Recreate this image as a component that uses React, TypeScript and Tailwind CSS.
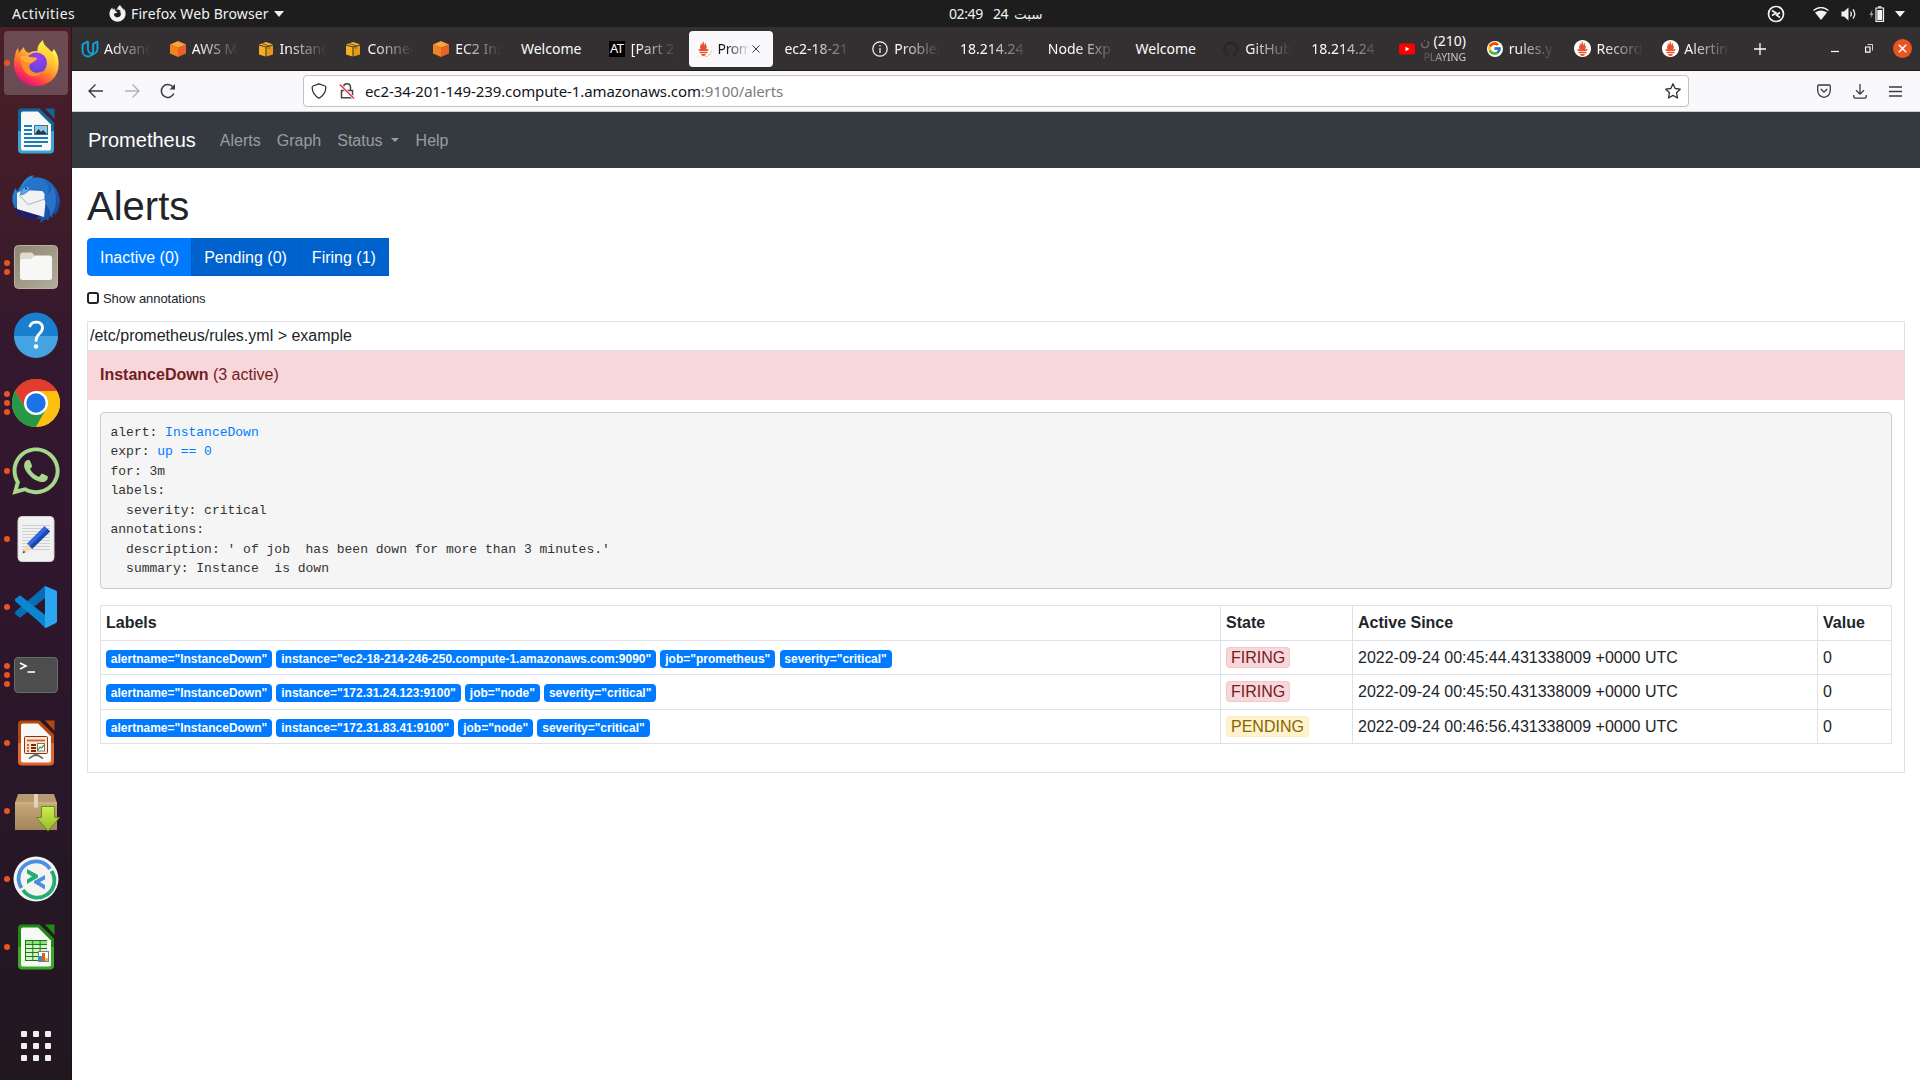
import React from "react";
import { SiPrometheus, SiUdacity, SiGithub } from "react-icons/si";
import { FcGoogle } from "react-icons/fc";
import { FaFirefoxBrowser, FaWhatsapp } from "react-icons/fa";

/* ---------- dock icons ---------- */

const FirefoxIcon = () => (
  <svg viewBox="0 0 48 48" className="size-12">
    <defs>
      <linearGradient id="ffBody" x1="0.85" y1="0.1" x2="0.25" y2="0.95">
        <stop offset="0" stopColor="#fff44f" />
        <stop offset="0.3" stopColor="#ffbd3a" />
        <stop offset="0.55" stopColor="#ff7a2c" />
        <stop offset="0.8" stopColor="#fb3550" />
        <stop offset="1" stopColor="#e00f86" />
      </linearGradient>
      <linearGradient id="ffTail" x1="0.6" y1="0" x2="0.5" y2="1">
        <stop offset="0" stopColor="#fff24a" />
        <stop offset="0.6" stopColor="#ffc936" />
        <stop offset="1" stopColor="#ff8a2a" />
      </linearGradient>
      <radialGradient id="ffGlobe" cx="0.6" cy="0.25" r="0.8">
        <stop offset="0" stopColor="#a13cf0" />
        <stop offset="0.6" stopColor="#7542e5" />
        <stop offset="1" stopColor="#4a46c8" />
      </radialGradient>
    </defs>
    <path d="M3 17 C3 13 5 10 6 9 L7 14 C8 12 10 10 12 8 C12 11 14 13 17 14 C20 12 24 11 28 13 L38 14 C37 11 39 12 40 13 L42 10 C46 16 47 21 46.500 27 C46 39 36 47 24.500 47 C12 47 2.500 38 2 26 C1.800 22 2 19 3 17 Z" fill="url(#ffBody)" />
    <circle cx="24.500" cy="24" r="10.500" fill="url(#ffGlobe)" />
    <path d="M31 1 C27 4 25 8 25.500 13 C32 14 37 19 36.500 26 C36 30 34 33 31 35 C38 34 43 28 43 22 C43 17 40 13 37 10 C34 7 31 5 31 1 Z" fill="url(#ffTail)" />
    <path d="M8 18 C11 16 15 17 18 18 L25 19 C25 21 23 22 20 24 C17 25 17 28 18 30 C20 34 26 35 30 32 C28 38 19 39 14 34 C10 30 9 24 8 18 Z" fill="#ff8a2b" />
    <path d="M8 18 C12 16 15 17 18 18 L25 19 C24 22 21 22 19 24 C14 24 10 22 8 18 Z" fill="#ffae35" />
  </svg>
);

type DocProps = { dark: string; light: string; id: string; children: React.ReactNode };

const OfficeDoc = ({ dark, light, id, children }: DocProps) => (
  <svg viewBox="0 0 48 48" className="size-12">
    <defs>
      <linearGradient id={id} x1="0" y1="0" x2="0" y2="1">
        <stop offset="0" stopColor={dark} />
        <stop offset="0.49" stopColor={dark} />
        <stop offset="0.51" stopColor={light} />
        <stop offset="1" stopColor={light} />
      </linearGradient>
    </defs>
    <path d="M33 1.500 H42.500 V12 Z" fill={dark} />
    <path d="M9.500 1.500 H27.500 L42 15.500 V42.500 Q42 46.500 38 46.500 H10 Q6 46.500 6 42.500 V5.500 Q6 1.500 9.500 1.500 Z" fill={`url(#${id})`} />
    <path d="M11 4.500 H26 L39 17.500 V41.500 Q39 43.500 37 43.500 H11 Q9 43.500 9 41.500 V6.500 Q9 4.500 11 4.500 Z" fill="#f8f8f8" />
    {children}
  </svg>
);

const WriterIcon = () => (
  <OfficeDoc id="docWriter" dark="#10659c" light="#3ba5d4">
    <path d="M12 19 H20 M12 23 H20 M12 27 H20 M12 31 H36 M12 35 H36 M12 39 H30" stroke="#1b7cb6" strokeWidth="1.800" />
    <rect x="22.500" y="18.500" width="13" height="9" fill="#8fc7e8" stroke="#1b7cb6" />
    <path d="M23 27 L26.500 22 L29 25 L31 23 L35 27 Z" fill="#333" />
    <path d="M32 19 h3 v3 Z" fill="#fbb62b" />
  </OfficeDoc>
);

const ImpressIcon = () => (
  <OfficeDoc id="docImpress" dark="#b5470d" light="#e0662c">
    <rect x="12.500" y="17.500" width="23" height="17" rx="1" fill="#fbe3d5" stroke="#8b3510" />
    <path d="M15 21.500 H33" stroke="#d6602a" strokeWidth="1.800" />
    <path d="M15 26 h2 M15 29 h2 M15 32 h2" stroke="#d6602a" strokeWidth="1.800" />
    <path d="M19 26 h5 M19 29 h5 M19 32 h5" stroke="#7a2b08" strokeWidth="1.800" />
    <rect x="25.500" y="24.500" width="7" height="7.500" fill="#fff" stroke="#777" />
    <path d="M26 31 L28 28 L29.500 29 L32 26" stroke="#2ea12e" strokeWidth="1.200" fill="none" />
    <path d="M24 35 L17 39.500 M24 35 L31 39.500 M22 36.500 h4" stroke="#666" strokeWidth="1.500" />
  </OfficeDoc>
);

const CalcIcon = () => (
  <OfficeDoc id="docCalc" dark="#1f8a12" light="#3bab26">
    <rect x="13" y="17" width="22" height="21" fill="#1a7a10" />
    {[18, 22, 26, 30, 34].map((y) =>
      [14, 21.3, 28.6].map((x) => (
        <rect key={`${x}-${y}`} x={x} y={y} width="6.300" height="3" fill={y === 18 ? "#8ce07c" : "#d4f5cc"} />
      )),
    )}
    <rect x="26.500" y="28.500" width="10" height="10" fill="#fff" stroke="#7b7b7b" />
    <rect x="27" y="33" width="3" height="5" fill="#2d93d1" />
    <rect x="30" y="30" width="3" height="8" fill="#dd5a2c" />
    <rect x="33" y="35" width="3" height="3" fill="#f3bc2a" />
  </OfficeDoc>
);

const ThunderbirdIcon = () => (
  <svg viewBox="0 0 48 48" className="size-12">
    <defs>
      <linearGradient id="tbBlue" x1="0" y1="0" x2="1" y2="1">
        <stop offset="0" stopColor="#2f9be0" />
        <stop offset="0.5" stopColor="#1f62bd" />
        <stop offset="1" stopColor="#164391" />
      </linearGradient>
    </defs>
    <path d="M10 9 C14 2 19 0 22 0.500 L20 3 C34 0 47 11 48 26 C48 33 44 39 43 40 L42 37 L40 43 L38 41 L36 46 L34 44 L28 48 L29 43 C14 48 2 38 0.500 26 C0 21 1 17 4 13 L5 17 Z" fill="url(#tbBlue)" />
    <path d="M2 34 C6 42 14 45 24 44 L32 38 L6 32 Z" fill="#221b66" />
    <path d="M5 18 L11 15 L31 16 L34 22 L32 42 L5 34 Z" fill="#f1f2f4" />
    <path d="M7 20 L16 29.500 L33 24" fill="none" stroke="#aaa" strokeWidth="0.900" />
    <path d="M8 20 C9 11 15 4 24 3 C35 5 40 14 34 20 C30 14 22 12 17 15.500 C14 18 11 21 8 20 Z" fill="#2474cb" />
    <path d="M9 19.500 C9 14 13 11 17 12.500 C16 17 12 20.500 9 19.500 Z" fill="#5aa8ea" />
    <circle cx="14" cy="13.500" r="1" fill="#112b62" />
    <path d="M33 18 C38 20 42 14 38 8 C46 17 46 32 38 42 C40 31 30 30 33 18 Z" fill="#2a72c8" />
  </svg>
);

const FilesIcon = () => (
  <svg viewBox="0 0 48 48" className="size-12">
    <defs>
      <linearGradient id="filesBg" x1="0" y1="0" x2="1" y2="1">
        <stop offset="0" stopColor="#8d8672" />
        <stop offset="1" stopColor="#b4ad9b" />
      </linearGradient>
    </defs>
    <rect x="2.500" y="2.500" width="43" height="43" rx="4" fill="url(#filesBg)" stroke="#b9b3a4" />
    <path d="M8 12 Q8 9.500 10.500 9.500 H20 L23 13 V18 H8 Z" fill="#dedacd" />
    <path d="M10.500 16 H19 L23 12.500 H37.500 Q40 12.500 40 15 V34.500 Q40 37 37.500 37 H10.500 Q8 37 8 34.500 V18.500 Q8 16 10.500 16 Z" fill="#f7f7f5" />
  </svg>
);

const HelpIcon = () => (
  <svg viewBox="0 0.500 48 48" className="size-12">
    <circle cx="24" cy="24" r="22" fill="#1b7fd0" />
    <path d="M2 25.500 H46 A22 22 0 0 1 2 25.500 Z" fill="#46a3e2" />
    <path d="M18 15.500 C20 10 30 10 30.500 17 C31 23 24 23 24 30" fill="none" stroke="#fff" strokeWidth="2.800" strokeLinecap="round" />
    <circle cx="24" cy="36" r="2.300" fill="#fff" />
  </svg>
);

const ChromeIcon = () => (
  <svg viewBox="0 0 48 48" className="size-12">
    <circle cx="24" cy="24" r="24" fill="#fcc010" />
    <path d="M24 12 H44.800 A24 24 0 0 0 3.200 12 L13.600 30 Z" fill="#e33b2e" />
    <path d="M3.200 12 A24 24 0 0 0 24 48 L34.400 30 L24 30 L13.600 30 Z" fill="#279847" />
    <path d="M34.400 30 A12 12 0 0 0 24 12 H44.800 A24 24 0 0 1 24 48 Z" fill="#fcc010" />
    <circle cx="24" cy="24" r="12" fill="#fff" />
    <circle cx="24" cy="24" r="9.700" fill="#1a73e8" />
  </svg>
);

const EditorIcon = () => (
  <svg viewBox="0 0 48 48" className="size-12">
    <rect x="6" y="1.500" width="36" height="45" rx="4" fill="#f1f1f1" stroke="#d2d2d2" />
    <path d="M10 10.500 H38 M10 13.500 H38 M10 16.500 H38 M10 19.500 H38 M10 22.500 H38 M10 25.500 H38 M10 28.500 H38 M10 31.500 H38 M10 34.500 H38" stroke="#cfcfcf" />
    <path d="M32.500 11 L38 16.500 L20 34 L15 28.500 Z" fill="#2f68dc" />
    <path d="M35.500 14 L38 16.500 L20 34 L17.500 31.500 Z" fill="#1c48ad" />
    <path d="M15 28.500 L20 34 L10.500 38.500 Z" fill="#f6d8b8" />
    <path d="M11.500 35.500 L13.500 37.300 L10.500 38.500 Z" fill="#444" />
  </svg>
);

const CodeIcon = () => (
  <svg viewBox="0 0 48 48" className="size-12">
    <path d="M3 30 Q3 29 4 28 L33 3 V15 L9 34 Q8 35 7 34 L3 31 Z" fill="#0a6db4" />
    <path d="M3 16 L7 13 Q8 12 9 13 L33 32 V44 L4 19 Q3 18 3 17 Z" fill="#0b86d1" />
    <path d="M33 3 L44 7.500 Q45 8 45 9 V38 Q45 39.500 44 40 L34 45 Q33 45 33 44 Z" fill="#2ba6f2" />
    <path d="M33 3 L32 3.500 L22 14 L33 14 Z" fill="#0a6db4" />
    <path d="M33 45 L22 33 L33 32 Z" fill="#0b86d1" />
  </svg>
);

const TerminalIcon = () => (
  <svg viewBox="0 0 48 48" className="size-12">
    <rect x="2.500" y="6.500" width="43" height="35" rx="3.500" fill="#4d4d4d" stroke="#6c6c6c" />
    <path d="M8 12 L14 15 L8 18" fill="none" stroke="#fff" strokeWidth="1.700" />
    <path d="M15.500 21 H23" stroke="#fff" strokeWidth="1.600" />
  </svg>
);

const PackageIcon = () => (
  <svg viewBox="0 -2 48 48" className="size-12">
    <defs>
      <linearGradient id="pkg" x1="0" y1="0" x2="0" y2="1">
        <stop offset="0" stopColor="#c6a879" />
        <stop offset="1" stopColor="#a3855b" />
      </linearGradient>
      <linearGradient id="pkgArrow" x1="0" y1="0" x2="0" y2="1">
        <stop offset="0" stopColor="#d3ea4f" />
        <stop offset="1" stopColor="#93bd2a" />
      </linearGradient>
    </defs>
    <path d="M6 5 H42 L45 14 H3 Z" fill="#b59a72" />
    <path d="M3 14 H45 V41 H3 Z" fill="url(#pkg)" />
    <path d="M3 14 H45" stroke="#d9c29b" />
    <path d="M22 5 H26 V18.500 H22 Z" fill="#e2d3b9" />
    <path d="M29.500 17.500 H42.500 V28.500 H47.500 L36 42 L24.500 28.500 H29.500 Z" fill="url(#pkgArrow)" stroke="#5f8f1c" />
  </svg>
);

const RemoteIcon = () => (
  <svg viewBox="0 0 48 48" className="size-12">
    <circle cx="24" cy="24" r="22.500" fill="#f5f4f0" />
    <path d="M9.500 33 A17 17 0 0 1 38 14" fill="none" stroke="#4a90e2" strokeWidth="3.800" />
    <path d="M39.500 16 A17 17 0 0 1 11 35" fill="none" stroke="#1fae75" strokeWidth="3.800" />
    <path d="M15 14 L26 20 L26 22.500 L15 29 V24.500 L20 21.500 L15 18.500 Z" fill="#1fae75" />
    <path d="M33 20 L22 26 V28 L33 34.500 V30 L28 27 L33 24.500 Z" fill="#4a90e2" />
  </svg>
);

const dock: { icon: React.ReactNode; dots: number; active?: boolean; name: string }[] = [
  { name: "firefox", icon: <FirefoxIcon />, dots: 1, active: true },
  { name: "writer", icon: <WriterIcon />, dots: 0 },
  { name: "mail", icon: <ThunderbirdIcon />, dots: 0 },
  { name: "files", icon: <FilesIcon />, dots: 2 },
  { name: "help", icon: <HelpIcon />, dots: 0 },
  { name: "chrome", icon: <ChromeIcon />, dots: 3 },
  { name: "whatsapp", icon: <FaWhatsapp className="size-[54px] shrink-0 text-[#a5d88a]" />, dots: 1 },
  { name: "editor", icon: <EditorIcon />, dots: 1 },
  { name: "code", icon: <CodeIcon />, dots: 1 },
  { name: "terminal", icon: <TerminalIcon />, dots: 3 },
  { name: "impress", icon: <ImpressIcon />, dots: 1 },
  { name: "package", icon: <PackageIcon />, dots: 1 },
  { name: "remote", icon: <RemoteIcon />, dots: 1 },
  { name: "calc", icon: <CalcIcon />, dots: 1 },
];

const Dock = () => (
  <aside className="flex w-[72px] shrink-0 flex-col border-r border-black/30 bg-[linear-gradient(180deg,#4a1f28_0%,#3c1b2a_22%,#34182f_30%,#2e162c_55%,#271728_75%,#22171f_100%)] pt-[2px]">
    {dock.map((item) => (
      <div key={item.name} className="flex h-[68px] items-center">
        <div className="flex w-1 shrink-0 flex-col items-end gap-[3px]">
          {Array.from({ length: item.dots }, (_, i) => (
            <span key={i} className="relative z-10 -mr-1.5 size-1.5 rounded-full bg-[#e95420]" />
          ))}
        </div>
        <div className={item.active ? "flex size-16 items-center justify-center rounded bg-white/20" : "flex size-16 items-center justify-center"}>
          {item.icon}
        </div>
      </div>
    ))}
    <div className="mt-auto mb-[19px] ml-[21px] grid w-[30px] grid-cols-3 gap-1.5">
      {Array.from({ length: 9 }, (_, i) => (
        <span key={i} className="size-1.5 rounded-[1px] bg-[#eeeeec]" />
      ))}
    </div>
  </aside>
);

/* ---------- system bar ---------- */

const TopBar = () => (
  <header className="grid h-[27px] shrink-0 grid-cols-[949px_1fr_auto] items-center bg-[#1d1d1d] text-[14px] leading-[26px] whitespace-nowrap text-[#f2f2f2]">
    <div className="flex items-center pl-3">
      <span className="w-[97px] tracking-[0.5px]">Activities</span>
      <FaFirefoxBrowser className="size-[17px]" />
      <span className="ml-[5px] w-[143px] tracking-[0.120px]">Firefox Web Browser</span>
      <svg viewBox="0 0 10 6" className="h-1.5 w-2.5"><path d="M0 0H10L5 6Z" fill="#f2f2f2" /></svg>
    </div>
    <div className="flex items-center">
      <span className="w-11 tracking-[-0.400px]">02:49</span>
      <span className="w-[21px] tracking-[-0.5px]">24</span>
      <span dir="rtl" className="font-['DejaVu_Sans'] text-[13.500px]">سبت</span>
    </div>
    <div className="flex items-center pr-[15px]">
      <svg viewBox="0 0 18 18" className="mr-7 size-[18px]">
        <circle cx="9" cy="9" r="7.500" fill="none" stroke="#f2f2f2" strokeWidth="1.700" />
        <path d="M5 5.500 L9 8 L5 10.500 M13 7.500 L9.500 10 L13 12.500" fill="none" stroke="#f2f2f2" strokeWidth="1.700" />
      </svg>
      <svg viewBox="0 0 16 13" className="mr-3 h-[13px] w-4">
        <path d="M0.500 3.500 Q8 -2.500 15.500 3.500" fill="none" stroke="#f2f2f2" strokeWidth="1.300" />
        <path d="M2 5.500 Q8 1.500 14 5.500 L8 13 Z" fill="#f2f2f2" />
      </svg>
      <svg viewBox="0 0 16 14" className="mr-3 h-3.5 w-4">
        <path d="M0.500 4.500 H3 L7.500 0.500 V13.500 L3 9.500 H0.500 Z" fill="#f2f2f2" />
        <path d="M9.500 4.500 Q11.200 7 9.500 9.500 M12 2.500 Q15.500 7 12 11.500" fill="none" stroke="#f2f2f2" strokeWidth="1.300" />
      </svg>
      <svg viewBox="0 0 16 16" className="mr-2.5 size-4">
        <path d="M3.500 3.500 L0.500 9 H2.500 L1.500 12.500 L4.500 7.500 H2.700 Z" fill="#aaa" />
        <path d="M7 2 H14.500 V15.300 H7 Z" fill="none" stroke="#f2f2f2" strokeWidth="1.200" />
        <path d="M9 0.300 h3.500 v1.500 h-3.500 Z M8.300 4 H13.200 V14 H8.300 Z" fill="#f2f2f2" />
      </svg>
      <svg viewBox="0 0 10 6" className="h-1.5 w-2.5"><path d="M0 0H10L5 6Z" fill="#f2f2f2" /></svg>
    </div>
  </header>
);

/* ---------- browser tabs ---------- */

const CubeIcon = () => (
  <svg viewBox="0 0 16 16" className="size-4 shrink-0">
    <path d="M8 0 L16 3.500 L8 7 L0 3.500 Z" fill="#f9a13a" />
    <path d="M0 3.500 L8 7 V16 L0 12.500 Z" fill="#f58220" />
    <path d="M16 3.500 L8 7 V16 L16 12.500 Z" fill="#e8622a" />
  </svg>
);

const BoxIcon = () => (
  <svg viewBox="0 0 16 16" className="size-4 shrink-0">
    <path d="M1 3.500 L8 1 L15 3.500 L8 5.500 Z" fill="#f6b52c" />
    <path d="M1 4.500 L7.500 6.300 V15.500 L1 13.500 Z" fill="#f3b022" />
    <path d="M15 4.500 L8.500 6.300 V15.500 L15 13.500 Z" fill="#e39a17" />
    <path d="M4 2.500 L11 4.700 V8" stroke="#6b4a10" strokeWidth="0.900" fill="none" />
  </svg>
);

const PromFav = () => (
  <span className="flex size-4 shrink-0 items-center justify-center rounded-full bg-[#e6522c]">
    <SiPrometheus className="size-[17px] shrink-0 text-white" />
  </span>
);

const tabs: { label: string; icon?: React.ReactNode; state?: "active" | "playing"; whole?: boolean }[] = [
  { label: "Advanc", icon: <SiUdacity className="size-4 shrink-0 overflow-visible text-[#12a9e0]" stroke="currentColor" strokeWidth="1.200" /> },
  { label: "AWS M", icon: <CubeIcon /> },
  { label: "Instanc", icon: <BoxIcon /> },
  { label: "Connec", icon: <BoxIcon /> },
  { label: "EC2 Ins", icon: <CubeIcon /> },
  { label: "Welcome", whole: true },
  { label: "[Part 2]", icon: <span className="flex size-4 shrink-0 items-center justify-center bg-black font-['Noto_Sans'] text-[13px] tracking-[-0.5px] text-white">AT</span> },
  { label: "Prom", icon: <PromFav />, state: "active" },
  { label: "ec2-18-21" },
  {
    label: "Problem",
    icon: (
      <svg viewBox="0 0 16 16" className="size-4 shrink-0" fill="none" stroke="#fbfbfe" strokeWidth="1.200">
        <circle cx="8" cy="8" r="7.200" />
        <path d="M8 7 V12 M8 4 V5.500" />
      </svg>
    ),
  },
  { label: "18.214.24" },
  { label: "Node Exp" },
  { label: "Welcome", whole: true },
  { label: "GitHub", icon: <SiGithub className="size-4 shrink-0 text-[#24292e]" /> },
  { label: "18.214.24" },
  {
    label: "(210)",
    state: "playing",
    icon: (
      <svg viewBox="0 0 16 16" className="size-4 shrink-0">
        <rect x="0" y="2.500" width="16" height="11" rx="2.500" fill="#f00" />
        <path d="M6.500 5.700 V10.300 L10.500 8 Z" fill="#fff" />
      </svg>
    ),
  },
  { label: "rules.y", icon: <span className="flex size-4 shrink-0 items-center justify-center rounded-full bg-white"><FcGoogle className="size-[15px]" /></span> },
  { label: "Record", icon: <PromFav /> },
  { label: "Alertin", icon: <PromFav /> },
];

const TabBar = () => (
  <div className="flex h-11 shrink-0 items-center border-b border-[#1f1b1c] bg-[#343031] pl-0.5 text-[14px] whitespace-nowrap text-[#fbfbfe]">
    {tabs.map((tab, i) => (
      <div key={i} className="flex h-full w-[87.800px] shrink-0 items-center">
        <div
          className={
            tab.state === "active"
              ? "flex h-9 w-[84px] items-center rounded bg-[#f9f9fb] pl-[7px] text-[#15141a]"
              : "flex h-9 w-[84px] items-center pl-2"
          }
        >
          {tab.icon && <span className="mr-1.5 flex shrink-0">{tab.icon}</span>}
          {tab.state === "playing" ? (
            <span className="flex w-[45px] flex-col items-end">
              <span className="flex items-center text-[14px] leading-[17px]"><span className="mr-1 opacity-30">ن</span>(210)</span>
              <span className="[mask-image:linear-gradient(90deg,rgba(0,0,0,.2),black_60%)] text-[10.500px] leading-4 tracking-[-0.1px] text-[#ccc]">PLAYING</span>
            </span>
          ) : (
            <span
              className={
                tab.whole
                  ? ""
                  : tab.state === "active"
                    ? "w-[34px] [mask-image:linear-gradient(90deg,black_25%,transparent_95%)] tracking-[-0.4px]"
                    : "min-w-0 flex-1 [mask-image:linear-gradient(90deg,black_calc(100%-48px),transparent_calc(100%-8px))]"
              }
            >
              {tab.label}
            </span>
          )}
          {tab.state === "active" && (
            <svg viewBox="0 0 9 9" className="size-2 shrink-0" stroke="#333" strokeWidth="1.100"><path d="M0.500 0.500 L8.500 8.500 M8.500 0.500 L0.500 8.500" /></svg>
          )}
        </div>
      </div>
    ))}
    <svg viewBox="0 0 12 12" className="ml-3 size-3 shrink-0" stroke="#fbfbfe" strokeWidth="1.300"><path d="M6 0 V12 M0 6 H12" /></svg>
    <div className="mr-2 ml-auto flex items-center">
      <svg viewBox="0 0 8 8" className="mr-[26px] size-2"><path d="M0 6.500 H8" stroke="#fff" strokeWidth="1.200" /></svg>
      <svg viewBox="0 0 8 9" className="mr-5 h-[9px] w-2" fill="none" stroke="#fff"><path d="M0.600 3 H5 V8.200 H0.600 Z" strokeWidth="1.200" /><path d="M2.500 0.500 H7.500 V6.500" strokeWidth="0.800" /></svg>
      <span className="flex size-[19px] items-center justify-center rounded-full bg-[#e95420]">
        <svg viewBox="0 0 9 9" className="size-[9px]" stroke="#fff" strokeWidth="1.500"><path d="M0.800 0.800 L8.200 8.200 M8.200 0.800 L0.800 8.200" /></svg>
      </span>
    </div>
  </div>
);

/* ---------- address bar ---------- */

const AddressBar = () => (
  <div className="flex h-[41px] shrink-0 items-center border-b border-[#ccccce] bg-[#f9f9fb] pl-4 text-[15px]">
    <svg viewBox="0 0 16 16" className="size-4" fill="none" stroke="#3a3944" strokeWidth="1.400"><path d="M1 8 H15 M7.500 1.500 L1 8 L7.500 14.500" /></svg>
    <svg viewBox="0 0 16 16" className="ml-5 size-4" fill="none" stroke="#b2b2b6" strokeWidth="1.400"><path d="M1 8 H15 M8.500 1.500 L15 8 L8.500 14.500" /></svg>
    <svg viewBox="0 0 16 16" className="ml-5 size-4" fill="none" stroke="#3a3944" strokeWidth="1.500"><path d="M13.800 10.500 A6.500 6.500 0 1 1 12.800 3.800" /><path d="M15 1 V6.500 H9.500 Z" fill="#3a3944" stroke="none" /></svg>
    <div className="ml-[127px] flex h-8 w-[1386px] items-center rounded border border-[#c2c2c5] bg-white pl-[7px]">
      <svg viewBox="0 0 16 16" className="size-4" fill="none" stroke="#333" strokeWidth="1.300"><path d="M8 0.800 L14 3 Q15 3.400 14.800 5 Q14.500 11.500 8 15.200 Q1.500 11.500 1.200 5 Q1 3.400 2 3 Z" /></svg>
      <svg viewBox="0 0 16 16" className="ml-3 size-4" fill="none" stroke="#444" strokeWidth="1.500">
        <path d="M2.500 7.500 H13.500 V14.800 H2.500 Z M4.500 7 V4.500 Q4.500 0.800 8 0.800 Q11.500 0.800 11.500 4.500 V7" />
        <path d="M0.800 1.500 L15 15.500" stroke="#fff" strokeWidth="3" />
        <path d="M0.800 1.500 L15 15.500" stroke="#e22850" strokeWidth="1.400" />
      </svg>
      <span className="ml-2.5 tracking-[-0.1px] whitespace-nowrap text-[#15141a]">
        ec2-34-201-149-239.compute-1.amazonaws.com<span className="text-[#7b7b80]">:9100/alerts</span>
      </span>
      <svg viewBox="0 0 16 16" className="mr-[7px] ml-auto size-4" fill="none" stroke="#333" strokeWidth="1.300" strokeLinejoin="round"><path d="M8 0.800 L10.200 5.500 L15.200 6.200 L11.500 9.700 L12.500 15 L8 12.400 L3.500 15 L4.500 9.700 L0.800 6.200 L5.800 5.500 Z" /></svg>
    </div>
    <div className="mr-[18px] ml-auto flex items-center gap-[22px]">
      <svg viewBox="0 0 14 14" className="size-3.5" fill="none" stroke="#3a3944" strokeWidth="1.300"><path d="M2 1 H12 Q13.300 1 13.300 2.300 V6.500 Q13 12.500 7 13.300 Q1 12.500 0.700 6.500 V2.300 Q0.700 1 2 1 Z M3.800 5 L7 8.200 L10.200 5" /></svg>
      <svg viewBox="0 0 14 15" className="h-[15px] w-3.5" fill="none" stroke="#3a3944" strokeWidth="1.300"><path d="M7 0 V10 M3 6.200 L7 10.200 L11 6.200 M0.700 11 V12.500 Q0.700 14.200 2.300 14.200 H11.700 Q13.300 14.200 13.300 12.500 V11" /></svg>
      <svg viewBox="0 0 13 11" className="h-[11px] w-[13px]" stroke="#3a3944" strokeWidth="1.300"><path d="M0 1 H13 M0 5.500 H13 M0 10 H13" /></svg>
    </div>
  </div>
);

/* ---------- alerts page ---------- */

const alerts = [
  { labels: ['alertname="InstanceDown"', 'instance="ec2-18-214-246-250.compute-1.amazonaws.com:9090"', 'job="prometheus"', 'severity="critical"'], state: "FIRING", since: "2022-09-24 00:45:44.431338009 +0000 UTC" },
  { labels: ['alertname="InstanceDown"', 'instance="172.31.24.123:9100"', 'job="node"', 'severity="critical"'], state: "FIRING", since: "2022-09-24 00:45:50.431338009 +0000 UTC" },
  { labels: ['alertname="InstanceDown"', 'instance="172.31.83.41:9100"', 'job="node"', 'severity="critical"'], state: "PENDING", since: "2022-09-24 00:46:56.431338009 +0000 UTC" },
];

const cell = "border border-[#dee2e6] px-[5px] py-[4.800px] text-left align-top";
const firstRowCell = "border border-[#dee2e6] px-[5px] pt-[5.500px] pb-[4.100px] text-left align-top";

const AlertsPage = () => (
  <div className="min-h-0 flex-1 bg-white font-['Liberation_Sans',sans-serif] text-[16px] leading-6 text-[#212529]">
    <nav className="flex h-14 items-center bg-[#343a40] px-4 text-white/50">
      <span className="mr-4 text-[20px] leading-[30px] text-white">Prometheus</span>
      <span className="px-2 pt-[9px] pb-[7px]">Alerts</span>
      <span className="px-2 pt-[9px] pb-[7px]">Graph</span>
      <span className="flex items-center px-2 pt-[9px] pb-[7px]">
        Status
        <span className="-mt-0.5 mr-px ml-2 border-x-[4.800px] border-t-[4.800px] border-x-transparent border-t-white/50" />
      </span>
      <span className="px-2 pt-[9px] pb-[7px]">Help</span>
    </nav>

    <main className="px-[15px] pt-3.5">
      <h1 className="mb-2 text-[40px] leading-[48px]">Alerts</h1>
      <div className="flex text-white">
        <span className="rounded-l border border-[#007bff] bg-[#007bff] px-3 pt-[7px] pb-[5px]">Inactive (0)</span>
        <span className="-ml-px border border-[#005cbf] bg-[#0062cc] px-3 pt-[7px] pb-[5px]">Pending (0)</span>
        <span className="-ml-px border border-[#005cbf] bg-[#0062cc] px-3 pt-[7px] pb-[5px]">Firing (1)</span>
      </div>
      <div className="mt-3 flex h-5 items-center text-[13px] leading-5">
        <span className="mr-1 size-3 rounded-[3px] border-2 border-[#212529]" />
        <span className="pt-px tracking-[-0.050px]">Show annotations</span>
      </div>

      <section className="mt-[13px] h-[452px] border border-[#dee2e6]">
        <div className="h-[29px] border-b border-[#dee2e6] pt-0.5 pl-0.5">/etc/prometheus/rules.yml &gt; example</div>
        <div className="h-[49px] bg-[#f8d7da] px-3 pt-3 text-[#721c24]">
          <b>InstanceDown</b> (3 active)
        </div>
        <div className="p-3">
          <pre className="mb-4 rounded border border-[#ccc] bg-[#f5f5f5] p-[9.500px] font-['Liberation_Mono',monospace] text-[13px] leading-[19.500px] text-[#333]">
            {"alert: "}<span className="text-[#007bff]">InstanceDown</span>
            {"\nexpr: "}<span className="text-[#007bff]">up == 0</span>
            {"\nfor: 3m\nlabels:\n  severity: critical\nannotations:\n  description: ' of job  has been down for more than 3 minutes.'\n  summary: Instance  is down"}
          </pre>
          <table className="w-full table-fixed border-collapse">
            <colgroup>
              <col />
              <col className="w-[132px]" />
              <col className="w-[465px]" />
              <col className="w-[74px]" />
            </colgroup>
            <thead>
              <tr>
                {["Labels", "State", "Active Since", "Value"].map((h) => (
                  <th key={h} className={cell}>{h}</th>
                ))}
              </tr>
            </thead>
            <tbody>
              {alerts.map((a, row) => {
                const td = row === 0 ? firstRowCell : cell;
                return (
                  <tr key={a.since}>
                    <td className={td}>
                      {a.labels.map((l) => (
                        <React.Fragment key={l}>
                          <span className="inline-block rounded bg-[#007bff] px-[4.800px] py-[3px] align-baseline text-[12px] leading-3 font-bold text-white">{l}</span>{" "}
                        </React.Fragment>
                      ))}
                    </td>
                    <td className={td}>
                      <span className={a.state === "FIRING" ? "rounded border border-[#f5c6cb] bg-[#f8d7da] px-1 py-px text-[#721c24]" : "rounded border border-[#ffeeba] bg-[#fff3cd] px-1 py-px text-[#856404]"}>
                        {a.state}
                      </span>
                    </td>
                    <td className={td}>{a.since}</td>
                    <td className={td}>0</td>
                  </tr>
                );
              })}
            </tbody>
          </table>
        </div>
      </section>
    </main>
  </div>
);

export default function App() {
  return (
    <div className="flex h-[1080px] w-[1920px] flex-col overflow-hidden font-['Noto_Sans','Open_Sans',sans-serif]">
      <TopBar />
      <div className="flex min-h-0 flex-1">
        <Dock />
        <div className="flex min-w-0 flex-1 flex-col">
          <TabBar />
          <AddressBar />
          <AlertsPage />
        </div>
      </div>
    </div>
  );
}
